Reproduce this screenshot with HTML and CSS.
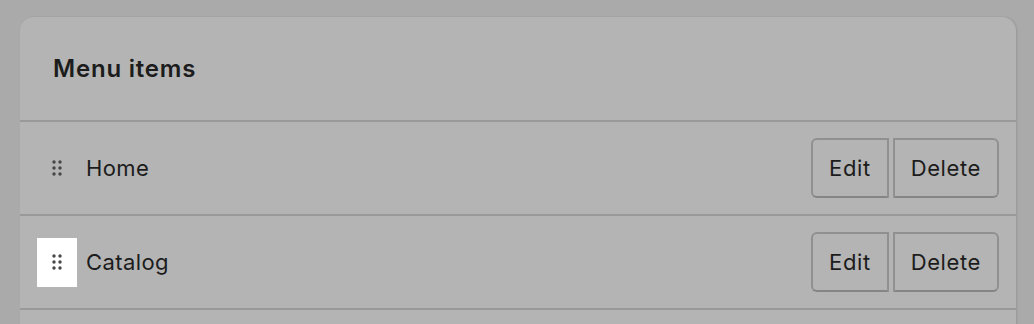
FILE: index.html
```html
<!DOCTYPE html>
<html lang="en">
<head>
  <meta charset="UTF-8" />
  <title>Menu items</title>
  <link rel="stylesheet" href="styles.css">
</head>
<body>
  <div class="card">
    <div class="card-header">
      <h2>Menu items</h2>
    </div>

    <div class="menu-row">
      <span class="handle">
        <svg width="12" height="16" viewBox="0 0 12 16"><g fill="#474747"><circle cx="3" cy="2" r="1.7"/><circle cx="9" cy="2" r="1.7"/><circle cx="3" cy="8" r="1.7"/><circle cx="9" cy="8" r="1.7"/><circle cx="3" cy="14" r="1.7"/><circle cx="9" cy="14" r="1.7"/></g></svg>
      </span>
      <span class="label">Home</span>
      <div class="actions">
        <button class="btn">Edit</button>
        <button class="btn">Delete</button>
      </div>
    </div>

    <div class="menu-row">
      <span class="handle focused">
        <svg width="12" height="16" viewBox="0 0 12 16"><g fill="#474747"><circle cx="3" cy="2" r="1.7"/><circle cx="9" cy="2" r="1.7"/><circle cx="3" cy="8" r="1.7"/><circle cx="9" cy="8" r="1.7"/><circle cx="3" cy="14" r="1.7"/><circle cx="9" cy="14" r="1.7"/></g></svg>
      </span>
      <span class="label">Catalog</span>
      <div class="actions">
        <button class="btn">Edit</button>
        <button class="btn">Delete</button>
      </div>
    </div>
  </div>
</body>
</html>
```

FILE: styles.css
```css
html, body {
  margin: 0;
  padding: 0;
  background: #aaaaab;
  font-family: 'Inter', 'Noto Sans', sans-serif;
  color: #1c1c1c;
  overflow: hidden;
}

body {
  padding: 17px 18px 0 20px;
}

.card {
  background: #b4b4b4;
  border-radius: 14px 14px 0 0;
  box-shadow: 1px 0 2px rgba(0, 0, 0, 0.12);
  height: 320px;
}

.card-header {
  height: 105px;
  display: flex;
  align-items: center;
  padding: 0 33px;
  border-bottom: 2px solid #999;
  box-sizing: border-box;
}

.card-header h2 {
  margin: 0;
  font-size: 24px;
  font-weight: 600;
  letter-spacing: 0.8px;
}

.menu-row {
  height: 94px;
  display: flex;
  align-items: center;
  padding: 0 17px 0 17px;
  border-bottom: 2px solid #999;
  box-sizing: border-box;
}

.handle {
  width: 40px;
  height: 49px;
  display: flex;
  align-items: center;
  justify-content: center;
}

.handle.focused {
  background: #fff;
}

.label {
  margin-left: 9px;
  font-size: 22px;
  letter-spacing: 0.4px;
  flex: 1;
}

.actions {
  display: flex;
  gap: 4px;
}

.btn {
  height: 60px;
  padding: 0 16px;
  font-family: inherit;
  font-size: 22px;
  letter-spacing: 0.6px;
  color: #1c1c1c;
  background: #b4b4b4;
  border: 2px solid #909090;
  border-bottom-color: #858585;
  border-radius: 6px 0 0 6px;
}

.btn + .btn {
  border-radius: 0 6px 6px 0;
}
```
